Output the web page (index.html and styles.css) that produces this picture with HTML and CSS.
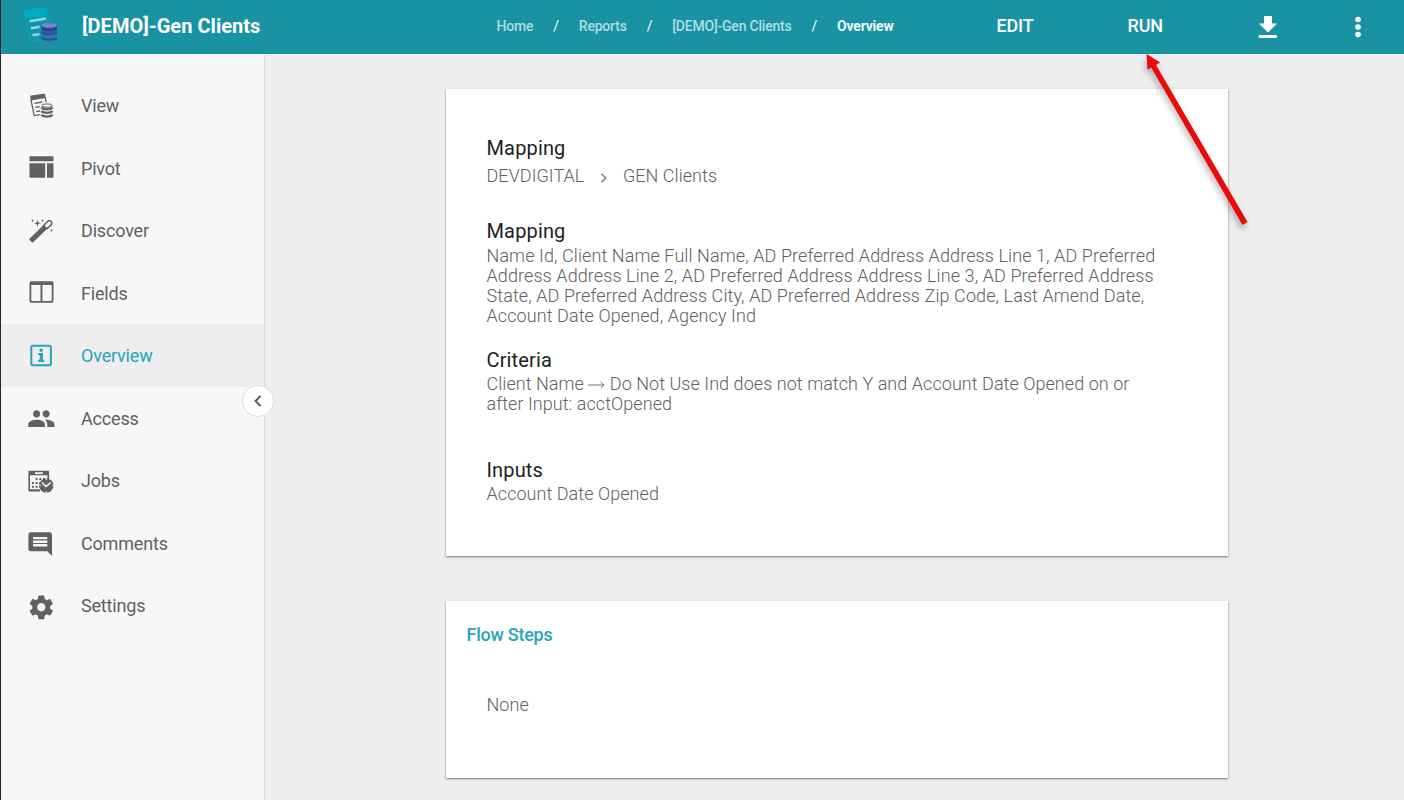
FILE: index.html
```html
<!DOCTYPE html>
<html lang="en">
<head>
<meta charset="utf-8">
<title>[DEMO]-Gen Clients</title>
<link rel="stylesheet" href="styles.css">
</head>
<body>
<div class="app">
  <header class="topbar">
    <svg class="logo" viewBox="0 0 36 38" width="36" height="38">
      <path fill="#00acc1" d="M.3 3.6 23.2 0l2 8.5L2.5 12z"/>
      <path fill="none" stroke="#00acc1" stroke-width="1.2" d="M2.5 10 8 34.8l11-1.6M24 7l1.600 8"/>
      <path stroke="#80deea" stroke-width="2.400" fill="none" d="M6.500 14.300 23 11.500M8 21.200l8.500-1.400M9.500 28.300l7-1.200"/>
      <path fill="#303f9f" d="M18.500 18.800v5.500c3 2.600 12.500 2.600 15.500 0v-5.500z"/>
      <path fill="none" stroke="#3949ab" stroke-width="2.300" d="M18.500 25.300c3 2.700 12.500 2.700 15.500 0M18.500 30.600c3 2.700 12.500 2.700 15.500 0"/>
      <path fill="none" stroke="#1c7f9f" stroke-width="1" d="M18.500 23.200c3 2.500 12.500 2.500 15.500 0M18.500 28.200c3 2.500 12.500 2.500 15.500 0"/>
      <ellipse fill="#7986cb" cx="26.250" cy="18.500" rx="7.750" ry="2.300"/>
    </svg>
    <h1 class="title">[DEMO]-Gen Clients</h1>
    <nav class="crumbs">
      <a>Home</a><i>/</i><a>Reports</a><i>/</i><a>[DEMO]-Gen Clients</a><i>/</i><b>Overview</b>
    </nav>
    <button class="action">EDIT</button>
    <button class="action">RUN</button>
    <svg class="download" viewBox="0 0 20 24" width="20" height="24"><path fill="#fff" d="M6 1h8v7.500h5L10 17.600 1 8.500h5zM.6 20.100h18.200v2.800H.6z"/></svg>
    <svg class="dots" viewBox="0 0 6 22" width="6" height="22"><g fill="#fff"><circle cx="3" cy="3.500" r="2.800"/><circle cx="3" cy="11" r="2.800"/><circle cx="3" cy="18.500" r="2.800"/></g></svg>
  </header>
  <div class="body">
    <aside class="sidebar">
      <a class="item"><svg viewBox="0 0 30 30">
        <path fill="currentColor" d="M4 4.800 18.700 2.500l1 4.600L5 9.500z"/>
        <path fill="none" stroke="currentColor" stroke-width="1.300" d="M4.800 8 8.200 24.600l6-.9M19 6l1.300 5.400M8.500 12.300l7.800-1.300M9.300 16.500l4.500-.8M10.200 20.700l4-.7"/>
        <ellipse cx="21" cy="14.600" rx="5.400" ry="1.700" fill="#f7f7f7" stroke="currentColor" stroke-width="1"/>
        <path fill="none" stroke="currentColor" stroke-width="2.300" d="M15.300 16.600c2.500 2.300 8.900 2.300 11.400 0M15.300 20.200c2.500 2.300 8.900 2.300 11.400 0M15.300 23.800c2.500 2.300 8.900 2.300 11.400 0"/>
      </svg><span>View</span></a>
      <a class="item"><svg viewBox="0 0 30 30"><path fill="currentColor" d="M4.300 3.200h22.400q.8 0 .8.800v4.200h-24V4q0-.8.800-.8zM3.500 10.200h15.700v14.600H4.300q-.8 0-.8-.8zM21 10.200h6.500V24q0 .8-.8.800H21z"/></svg><span>Pivot</span></a>
      <a class="item"><svg viewBox="0 0 30 30">
        <path fill="currentColor" d="M3.500 22.800 17.300 9.300l3.700 3.700L7.200 26.200q-.6.500-1.200 0l-2.500-2.200q-.5-.6 0-1.200z"/>
        <path fill="none" stroke="currentColor" stroke-width="1.500" d="m17.600 9.500 4.400-4.400q1.200-1.200 2.500 0l1 .9q1.100 1.200 0 2.400L21 12.800z"/>
        <path fill="currentColor" d="m11.500 3.600.8 2.800 2.700.8-2.700.8-.8 2.700-.8-2.700L8 7.200l2.700-.8zM6.500 2.900l.5 1.300 1.300.5-1.300.4-.5 1.400-.4-1.400-1.400-.4 1.400-.5zM16.700 2.900l.4 1.300 1.300.5-1.300.4-.4 1.400-.5-1.400-1.300-.4 1.300-.5zM25.600 12.600l.4 1.300 1.300.5-1.300.4-.4 1.400-.5-1.400-1.300-.4 1.300-.5z"/>
      </svg><span>Discover</span></a>
      <a class="item"><svg viewBox="0 0 30 30"><path fill="currentColor" fill-rule="evenodd" d="M5.200 3.200h20.600q1.700 0 1.700 1.700v18.200q0 1.700-1.700 1.700H5.200q-1.700 0-1.700-1.700V4.900q0-1.700 1.700-1.700zM5.300 7v15.100q0 .9.900.9h8.300V7zm11.100 0v16h8.400q.9 0 .9-.9V7z"/></svg><span>Fields</span></a>
      <a class="item active"><svg viewBox="0 0 30 30"><rect x="5.300" y="4.700" width="19.600" height="19.600" rx="1.300" fill="none" stroke="currentColor" stroke-width="2"/><path fill="currentColor" d="M12.200 12h4.700v6.800h1.300v2.100h-6v-2.100h1.500V14h-1.500z"/><circle cx="15.200" cy="9.300" r="1.800" fill="currentColor"/></svg><span>Overview</span></a>
      <a class="item"><svg viewBox="0 0 30 30"><path fill="currentColor" transform="translate(1.100 1.400) scale(1.190)" d="M16 11c1.660 0 2.990-1.340 2.990-3S17.660 5 16 5s-3 1.340-3 3 1.340 3 3 3zm-8 0c1.660 0 2.990-1.340 2.990-3S9.660 5 8 5 5 6.340 5 8s1.340 3 3 3zm0 2c-2.330 0-7 1.170-7 3.500V19h14v-2.500C15 14.170 10.330 13 8 13zm8 0c-.29 0-.62.020-.97.050 1.160.84 1.970 1.970 1.970 3.450V19h6v-2.500c0-2.330-4.670-3.500-7-3.500z"/></svg><span>Access</span></a>
      <a class="item"><svg viewBox="0 0 30 30">
        <path fill="currentColor" fill-rule="evenodd" d="M3.400 4.700h18.800q.9 0 .9.900V17h-1.700V9.300H4v14h10v2.200H3.400q-1 0-1-1V5.600q0-.9 1-.9zM9 6.200v1.700h7.800V6.200z"/>
        <path stroke="currentColor" stroke-width="2" stroke-dasharray="2 1.700" fill="none" d="M9.600 13h9.800M5.900 16.900h10M5.900 20.800h8"/>
        <circle cx="20.300" cy="19.600" r="7.200" fill="currentColor"/>
        <path fill="none" stroke="#f7f7f7" stroke-width="1.600" d="m15.900 16.500 4.100 4 4.600-3.800"/>
        <path fill="none" stroke="#f7f7f7" stroke-width="1" d="M20.300 12.700v1.300M20.300 25.200v1.300M13.400 19.600h1.300M25.900 19.600h1.300"/>
      </svg><span>Jobs</span></a>
      <a class="item"><svg viewBox="0 0 30 30"><path fill="currentColor" transform="translate(0 1.900) scale(1.183)" d="M21.990 4c0-1.100-.89-2-1.990-2H4c-1.100 0-2 .9-2 2v12c0 1.100.9 2 2 2h14l4 4-.010-18zM18 14H6v-2h12v2zm0-3H6V9h12v2zm0-3H6V6h12v2z"/></svg><span>Comments</span></a>
      <a class="item"><svg viewBox="0 0 30 30"><path fill="currentColor" transform="translate(1 2) scale(1.190)" d="M19.430 12.980c.040-.32.070-.64.070-.98s-.030-.66-.070-.98l2.110-1.650c.19-.15.240-.42.120-.64l-2-3.460c-.12-.22-.39-.3-.61-.22l-2.490 1c-.52-.4-1.080-.73-1.690-.98l-.38-2.650C14.460 2.180 14.250 2 14 2h-4c-.25 0-.46.180-.49.420l-.38 2.650c-.61.250-1.170.59-1.690.98l-2.490-1c-.23-.090-.49 0-.61.220l-2 3.460c-.13.220-.070.490.12.640l2.110 1.650c-.040.320-.070.650-.070.980s.030.660.070.980l-2.110 1.650c-.19.150-.24.420-.12.640l2 3.460c.12.220.39.300.61.220l2.490-1c.52.400 1.080.730 1.690.980l.38 2.650c.030.240.240.420.490.420h4c.25 0 .46-.18.49-.42l.38-2.650c.61-.25 1.170-.59 1.690-.98l2.490 1c.23.090.49 0 .61-.22l2-3.460c.12-.22.070-.49-.12-.64l-2.110-1.650zM12 15.500c-1.930 0-3.500-1.570-3.500-3.500s1.570-3.500 3.500-3.500 3.500 1.570 3.500 3.500-1.570 3.500-3.500 3.500z"/></svg><span>Settings</span></a>
      <button class="collapse"><svg viewBox="0 0 10 14" width="10" height="14"><path d="M7.500 2 2.500 7l5 5" fill="none" stroke="#555" stroke-width="1.800"/></svg></button>
    </aside>
    <main class="content">
      <section class="card details">
        <h2>Mapping</h2>
        <p class="path"><span>DEVDIGITAL</span><svg viewBox="0 0 8 10" width="8" height="10"><path d="m1.500.8 4.300 4.200-4.300 4.200" fill="none" stroke="#777" stroke-width="1.400"/></svg><span>GEN Clients</span></p>
        <h2 class="fields-title">Mapping</h2>
        <p class="long">Name Id, Client Name Full Name, AD Preferred Address Address Line 1, AD Preferred<br>Address Address Line 2, AD Preferred Address Address Line 3, AD Preferred Address<br>State, AD Preferred Address City, AD Preferred Address Zip Code, Last Amend Date,<br>Account Date Opened, Agency Ind</p>
        <h2 class="criteria-title">Criteria</h2>
        <p>Client Name <svg class="arrow" viewBox="0 0 17 8" width="17" height="8"><path d="M0 4h16M12.500 1 16 4l-3.500 3" fill="none" stroke="#777" stroke-width="1"/></svg> Do Not Use Ind does not match Y and Account Date Opened on or<br>after Input: acctOpened</p>
        <h2 class="inputs-title">Inputs</h2>
        <p>Account Date Opened</p>
      </section>
      <section class="card steps">
        <h3>Flow Steps</h3>
        <p>None</p>
      </section>
    </main>
  </div>
  <svg class="pointer" viewBox="0 0 110 180" width="110" height="180"><path fill="#ea0a0a" d="M6.500 4 20.200 12.500l-4.200 2.400L107.500 172l-5 3L11.200 17.500 7.500 19.800z"/></svg>
</div>
</body>
</html>
```
FILE: styles.css
```css
* { box-sizing: border-box; }
body { margin: 0; font-family: Roboto, sans-serif; background: #eee; }
h1, h2, h3, p { margin: 0; }
button { border: 0; padding: 0; background: none; font-family: inherit; }
.app { position: relative; display: flex; flex-direction: column; height: 800px; border-left: 1px solid #25282b; overflow: hidden; }
.topbar { display: grid; grid-template-columns: 59.500px 414.500px 500px 131px 130px 97px 50px; align-items: center; flex: 0 0 54px; padding: 0 0 2px 21.500px; background: #1993a3; color: #fff; }
.logo { margin-top: 0; }
.title { font-size: 20px; line-height: 24px; font-weight: 700; letter-spacing: 0.030px; white-space: nowrap; }
.crumbs { display: flex; gap: 20px; font-size: 14px; line-height: 16px; font-weight: 500; letter-spacing: -0.210px; color: #b0dde2; white-space: nowrap; }
.crumbs i { color: #fff; font-style: normal; font-weight: 400; }
.crumbs b { color: #eefafa; }
.action { color: #fff; font-size: 18px; line-height: 22px; font-weight: 500; text-align: left; letter-spacing: -0.150px; }
.download { margin-top: 1px; }
.dots { margin-top: 2px; }
.body { display: flex; flex: 1; min-height: 0; }
.sidebar { position: relative; flex: 0 0 264px; padding-top: 20.250px; background: #f7f7f7; border-right: 1px solid #dedede; }
.item { display: flex; align-items: center; gap: 25px; height: 62.500px; padding-left: 25px; font-size: 18px; letter-spacing: -0.180px; color: #616161; }
.item svg { width: 30px; height: 30px; }
.active { background: #eee; color: #26a5ba; }
.collapse { position: absolute; right: -10px; top: 331px; display: flex; align-items: center; justify-content: center; width: 32px; height: 32px; border: 1px solid #dedede; border-radius: 50%; background: #fff; }
.content { flex: 1; padding: 35px 0 0 181px; }
.card { width: 782px; background: #fff; box-shadow: 0 1px 2px rgba(0, 0, 0, .5); }
.card p { font-size: 18px; line-height: 20px; font-weight: 300; letter-spacing: 0.050px; color: #616161; white-space: nowrap; }
.card .long { letter-spacing: 0.090px; }
.details { height: 467px; padding: 47px 0 0 40.500px; }
.details h2 { font-size: 20px; line-height: 24px; font-weight: 400; letter-spacing: 0.150px; color: #212121; }
.details .path { display: flex; align-items: center; margin-top: 6px; }
.path svg { margin: 4px 15px 0 15.500px; }
.details .fields-title { margin-top: 33px; }
.fields-title + p { margin-top: 3px; }
.details .criteria-title { margin-top: 22px; }
.details .criteria-title + p, .details .inputs-title + p { margin-top: 2px; }
.details .inputs-title { margin-top: 44px; }
.arrow { vertical-align: 1px; }
.steps { height: 177px; margin-top: 45px; padding: 24px 0 0 20.500px; }
.steps h3 { font-size: 18px; line-height: 20px; font-weight: 500; letter-spacing: -0.250px; color: #26a5ba; }
.steps p { margin: 50px 0 0 20px; }
.pointer { position: absolute; left: 1139px; top: 50px; filter: drop-shadow(-1px 4px 3px rgba(0, 0, 0, .3)); }
```
